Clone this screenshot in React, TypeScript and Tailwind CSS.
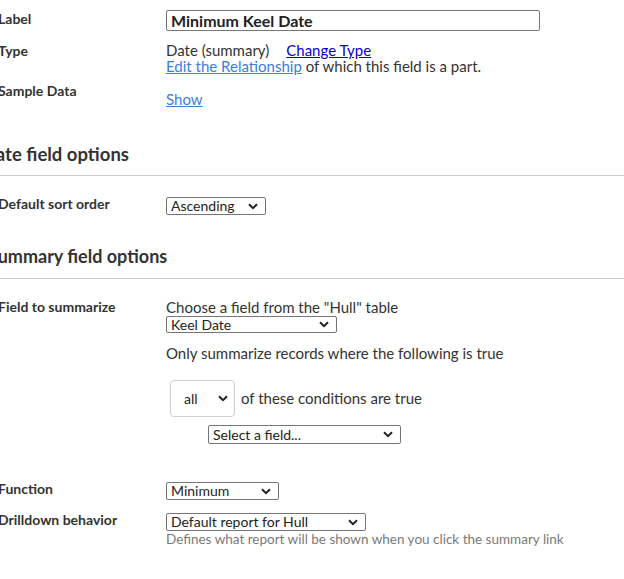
import React from "react";

function Chevron() {
	return (
		<svg width="10" height="7" viewBox="0 0 10 7" className="shrink-0">
			<path d="M1 1.2 L5 5.2 L9 1.2" fill="none" stroke="#222" strokeWidth="2" />
		</svg>
	);
}

function Select({ value, className }: { value: string; className: string }) {
	return (
		<div
			className={`flex items-center justify-between border border-[#767676] rounded-[2px] bg-white pl-1 pr-[7px] text-[14px] leading-none text-[#222] ${className}`}
		>
			<span>{value}</span>
			<Chevron />
		</div>
	);
}

function Row({
	label,
	children,
	className = "",
}: {
	label: string;
	children?: React.ReactNode;
	className?: string;
}) {
	return (
		<div className={`flex items-start pl-[10px] ${className}`}>
			<div className="w-[168px] shrink-0 font-bold text-[14px] leading-[16px] text-[#333]">
				{label}
			</div>
			<div className="flex-1">{children}</div>
		</div>
	);
}

export default function App() {
	return (
		<div
			className="bg-white min-h-[579px] w-[624px] overflow-hidden text-[#333]"
			style={{ fontFamily: "Lato, 'Open Sans', sans-serif" }}
		>
			<div className="-ml-3 w-[636px]">
				<div className="flex items-start pl-[10px] pt-[10px]">
					<div className="w-[168px] shrink-0 font-bold text-[14px] leading-[18px] text-[#333]">
						Label
					</div>
					<div className="w-[374px] h-[21px] border border-[#767676] rounded-[2px] px-[4px] flex items-center font-bold text-[16px] text-[#222]">
						Minimum Keel Date
					</div>
				</div>

				<Row label="Type" className="mt-[12px]">
					<div className="text-[15px] leading-[15px] whitespace-nowrap">
						<span>Date (summary)</span>
						<a href="#" className="ml-[17px] text-[#0b00c8] underline">
							Change Type
						</a>
					</div>
					<div className="text-[15px] leading-[16px] whitespace-nowrap">
						<a href="#" className="text-[#3b7ddd] underline">
							Edit the Relationship
						</a>{" "}
						of which this field is a part.
					</div>
				</Row>

				<Row label="Sample Data" className="mt-[9px]">
					<a href="#" className="block mt-[8px] text-[15px] leading-[16px] text-[#3b7ddd] underline">
						Show
					</a>
				</Row>

				<h2 className="mt-[35px] -ml-[6px] font-bold text-[18.5px] leading-[24px] text-[#333] whitespace-nowrap">
					Date field options
				</h2>
				<div className="mt-[9px] border-t border-[#cccccc]" />

				<Row label="Default sort order" className="mt-[20px]">
					<Select value="Ascending" className="w-[100px] h-[18px] mt-[1px]" />
				</Row>

				<h2 className="mt-[29px] font-bold text-[18px] leading-[24px] text-[#333] whitespace-nowrap">
					Summary field options
				</h2>
				<div className="mt-[10px] border-t border-[#cccccc]" />

				<Row label="Field to summarize" className="mt-[20px]">
					<div className="text-[15px] leading-[16px] whitespace-nowrap">Choose a field from the "Hull" table</div>
					<Select value="Keel Date" className="w-[171px] h-[17px] mt-[1px]" />
					<div className="mt-[12px] text-[15px] leading-[16px] whitespace-nowrap">
						Only summarize records where the following is true
					</div>
					<div className="mt-[19px] ml-[4px] flex items-center gap-[6px]">
						<div className="w-[65px] h-[37px] border border-[#cfcfcf] rounded-[4px] flex items-center justify-between pl-[13px] pr-[6px] text-[14px] text-[#222]">
							<span>all</span>
							<Chevron />
						</div>
						<span className="text-[15px]">of these conditions are true</span>
					</div>
					<Select value="Select a field..." className="ml-[42px] mt-[8px] w-[193px] h-[19px]" />
				</Row>

				<Row label="Function" className="mt-[37px]">
					<Select value="Minimum" className="w-[113px] h-[18px] mt-[1px]" />
				</Row>

				<Row label="Drilldown behavior" className="mt-[12px]">
					<Select value="Default report for Hull" className="w-[200px] h-[18px] mt-[1px]" />
					<div className="text-[13.5px] leading-[16px] text-[#7a7a7a] whitespace-nowrap">
						Defines what report will be shown when you click the summary link
					</div>
				</Row>
			</div>
		</div>
	);
}
